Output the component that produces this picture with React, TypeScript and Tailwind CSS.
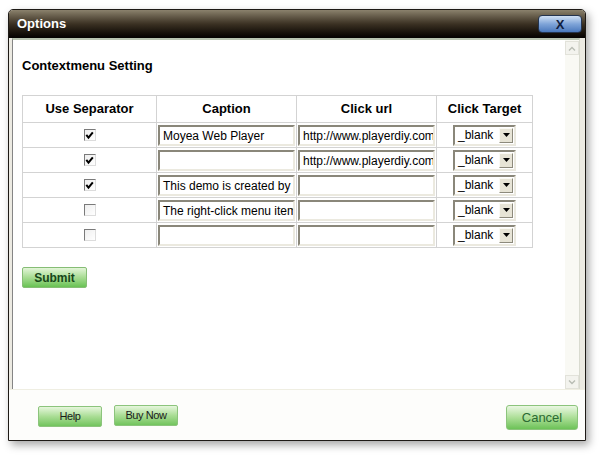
import React from "react";

// Rows of the context menu table
type MenuRow = {
  separator: boolean;
  caption: string;
  url: string;
};

const rows: MenuRow[] = [
  { separator: true, caption: "Moyea Web Player", url: "http://www.playerdiy.com" },
  { separator: true, caption: "", url: "http://www.playerdiy.com" },
  { separator: true, caption: "This demo is created by", url: "" },
  { separator: false, caption: "The right-click menu item", url: "" },
  { separator: false, caption: "", url: "" },
];

function CheckBox({ checked }: { checked: boolean }) {
  return (
    <span className="mx-auto flex h-[12px] w-[12px] items-center justify-center border border-t-[#7a7a7a] border-l-[#7a7a7a] border-r-[#dcdcdc] border-b-[#dcdcdc] bg-gradient-to-br from-[#eeeeee] to-[#ffffff]">
      {checked && (
        <svg width="9" height="9" viewBox="0 0 9 9">
          <path d="M1.3 3.8 L3.5 6.6 L7.8 1.3" fill="none" stroke="#000" strokeWidth="2" />
        </svg>
      )}
    </span>
  );
}

function TextBox({ value }: { value: string }) {
  return (
    <div className="h-[21px] w-[137px] overflow-hidden whitespace-nowrap border-2 border-t-[#8a877a] border-l-[#8a877a] border-r-[#ebe9df] border-b-[#ebe9df] bg-white pl-[3px] pt-[1px] text-[12px] leading-[17px] text-black">
      {value}
    </div>
  );
}

function SelectBox() {
  return (
    <div className="mx-auto flex h-[21px] w-[63px] items-center border-2 border-t-[#8a877a] border-l-[#8a877a] border-r-[#ebe9df] border-b-[#ebe9df] bg-white">
      <span className="flex-1 pl-[3px] pt-[1px] text-[12px] leading-[17px] text-black">_blank</span>
      <span className="mr-[1px] flex h-[15px] w-[14px] items-center justify-center border border-t-[#fbfaf4] border-l-[#fbfaf4] border-r-[#8d8a7c] border-b-[#8d8a7c] bg-[#e7e4d6]">
        <svg width="7" height="4" viewBox="0 0 7 4">
          <path d="M0 0 H7 L3.5 4 Z" fill="#000" />
        </svg>
      </span>
    </div>
  );
}

export default function App() {
  return (
    <div className="h-[456px] w-[600px] bg-white pl-[8px] pt-[9px] font-['Liberation_Sans',Arial,sans-serif]">
      {/* VENTANA */}
      <div className="flex h-[432px] w-[578px] flex-col overflow-hidden rounded-t-[5px] border border-[#1e1a16] shadow-[3px_4px_8px_rgba(0,0,0,0.35)]">
        {/* BARRA DE TÍTULO */}
        <div className="flex h-[28px] shrink-0 items-center justify-between bg-gradient-to-b from-[#8b826d] via-[#3b3123] to-[#050302] pl-[8px] pr-[3px]">
          <span className="text-[13px] font-bold text-white">Options</span>
          <button className="flex h-[18px] w-[44px] items-center justify-center rounded-[4px] border border-[#24344f] bg-gradient-to-b from-[#d0e0f4] via-[#7fa4d8] to-[#4a78bc] text-[13px] font-bold leading-none text-[#102040]">
            X
          </button>
        </div>

        {/* CUERPO */}
        <div className="flex flex-1 flex-col bg-[#eceae2] pl-[3px] pr-[5px]">
          <div className="flex h-[351px] shrink-0 border-l border-t-2 border-r border-l-[#858585] border-t-[#b9c4b1] border-r-[#d9dbd0] bg-white">
            {/* CONTENIDO */}
            <div className="flex-1 pl-[9px] pt-[18px]">
              <div className="text-[13px] font-bold leading-[16px] text-black">Contextmenu Setting</div>

              <table className="mt-[21px] border-collapse text-black">
                <thead>
                  <tr className="h-[27px]">
                    <th className="w-[134px] border border-[#d3d3d3] text-[13px] font-bold">Use Separator</th>
                    <th className="w-[140px] border border-[#d3d3d3] text-[13px] font-bold">Caption</th>
                    <th className="w-[140px] border border-[#d3d3d3] text-[13px] font-bold">Click url</th>
                    <th className="w-[96px] border border-[#d3d3d3] text-[13px] font-bold">Click Target</th>
                  </tr>
                </thead>
                <tbody>
                  {rows.map((row, i) => (
                    <tr key={i} className="h-[25px]">
                      <td className="border border-[#d3d3d3] p-0">
                        <CheckBox checked={row.separator} />
                      </td>
                      <td className="border border-[#d3d3d3] px-[1px] py-0">
                        <TextBox value={row.caption} />
                      </td>
                      <td className="border border-[#d3d3d3] px-[1px] py-0">
                        <TextBox value={row.url} />
                      </td>
                      <td className="border border-[#d3d3d3] p-0">
                        <SelectBox />
                      </td>
                    </tr>
                  ))}
                </tbody>
              </table>

              <button className="mt-[19px] h-[21px] w-[65px] rounded-[2px] border border-[#86bd75] bg-gradient-to-b from-[#e3f5d8] via-[#a7dc92] to-[#68c253] text-[12px] font-bold text-[#17461a]">
                Submit
              </button>
            </div>

            {/* BARRA DE DESPLAZAMIENTO */}
            <div className="flex w-[14px] shrink-0 flex-col justify-between bg-[#f9f9f4] pt-[1px]">
              <div className="flex h-[14px] items-center justify-center border border-[#e2e2da] bg-[#f3f3ee]">
                <svg width="8" height="5" viewBox="0 0 8 5">
                  <path d="M1 4.5 L4 1.5 L7 4.5" fill="none" stroke="#b8bcb4" strokeWidth="1.4" />
                </svg>
              </div>
              <div className="flex h-[14px] items-center justify-center border border-[#e2e2da] bg-[#f3f3ee]">
                <svg width="8" height="5" viewBox="0 0 8 5">
                  <path d="M1 0.5 L4 3.5 L7 0.5" fill="none" stroke="#b8bcb4" strokeWidth="1.4" />
                </svg>
              </div>
            </div>
          </div>

          {/* PIE */}
          <div className="-ml-[3px] -mr-[5px] flex flex-1 items-start justify-between border-t border-[#efeee2] bg-[#fdfdfb] pl-[29px] pr-[7px] pt-[15px]">
            <div className="flex items-start gap-[12px]">
              <button className="mt-[1px] h-[21px] w-[64px] rounded-[2px] border border-[#8cc47c] bg-gradient-to-b from-[#e6f6dc] via-[#a9dd94] to-[#72c45d] text-[11px] tracking-[-0.4px] text-[#1a1a1a]">
                Help
              </button>
              <button className="h-[21px] w-[64px] rounded-[2px] border border-[#8cc47c] bg-gradient-to-b from-[#e6f6dc] via-[#a9dd94] to-[#72c45d] text-[11px] tracking-[-0.4px] text-[#1a1a1a]">
                Buy Now
              </button>
            </div>
            <button className="h-[25px] w-[72px] rounded-[3px] border border-[#8cc47c] bg-gradient-to-b from-[#eaf7e2] via-[#addf98] to-[#6cc257] text-[13px] text-[#2b6a33]">
              Cancel
            </button>
          </div>
        </div>
      </div>
    </div>
  );
}
